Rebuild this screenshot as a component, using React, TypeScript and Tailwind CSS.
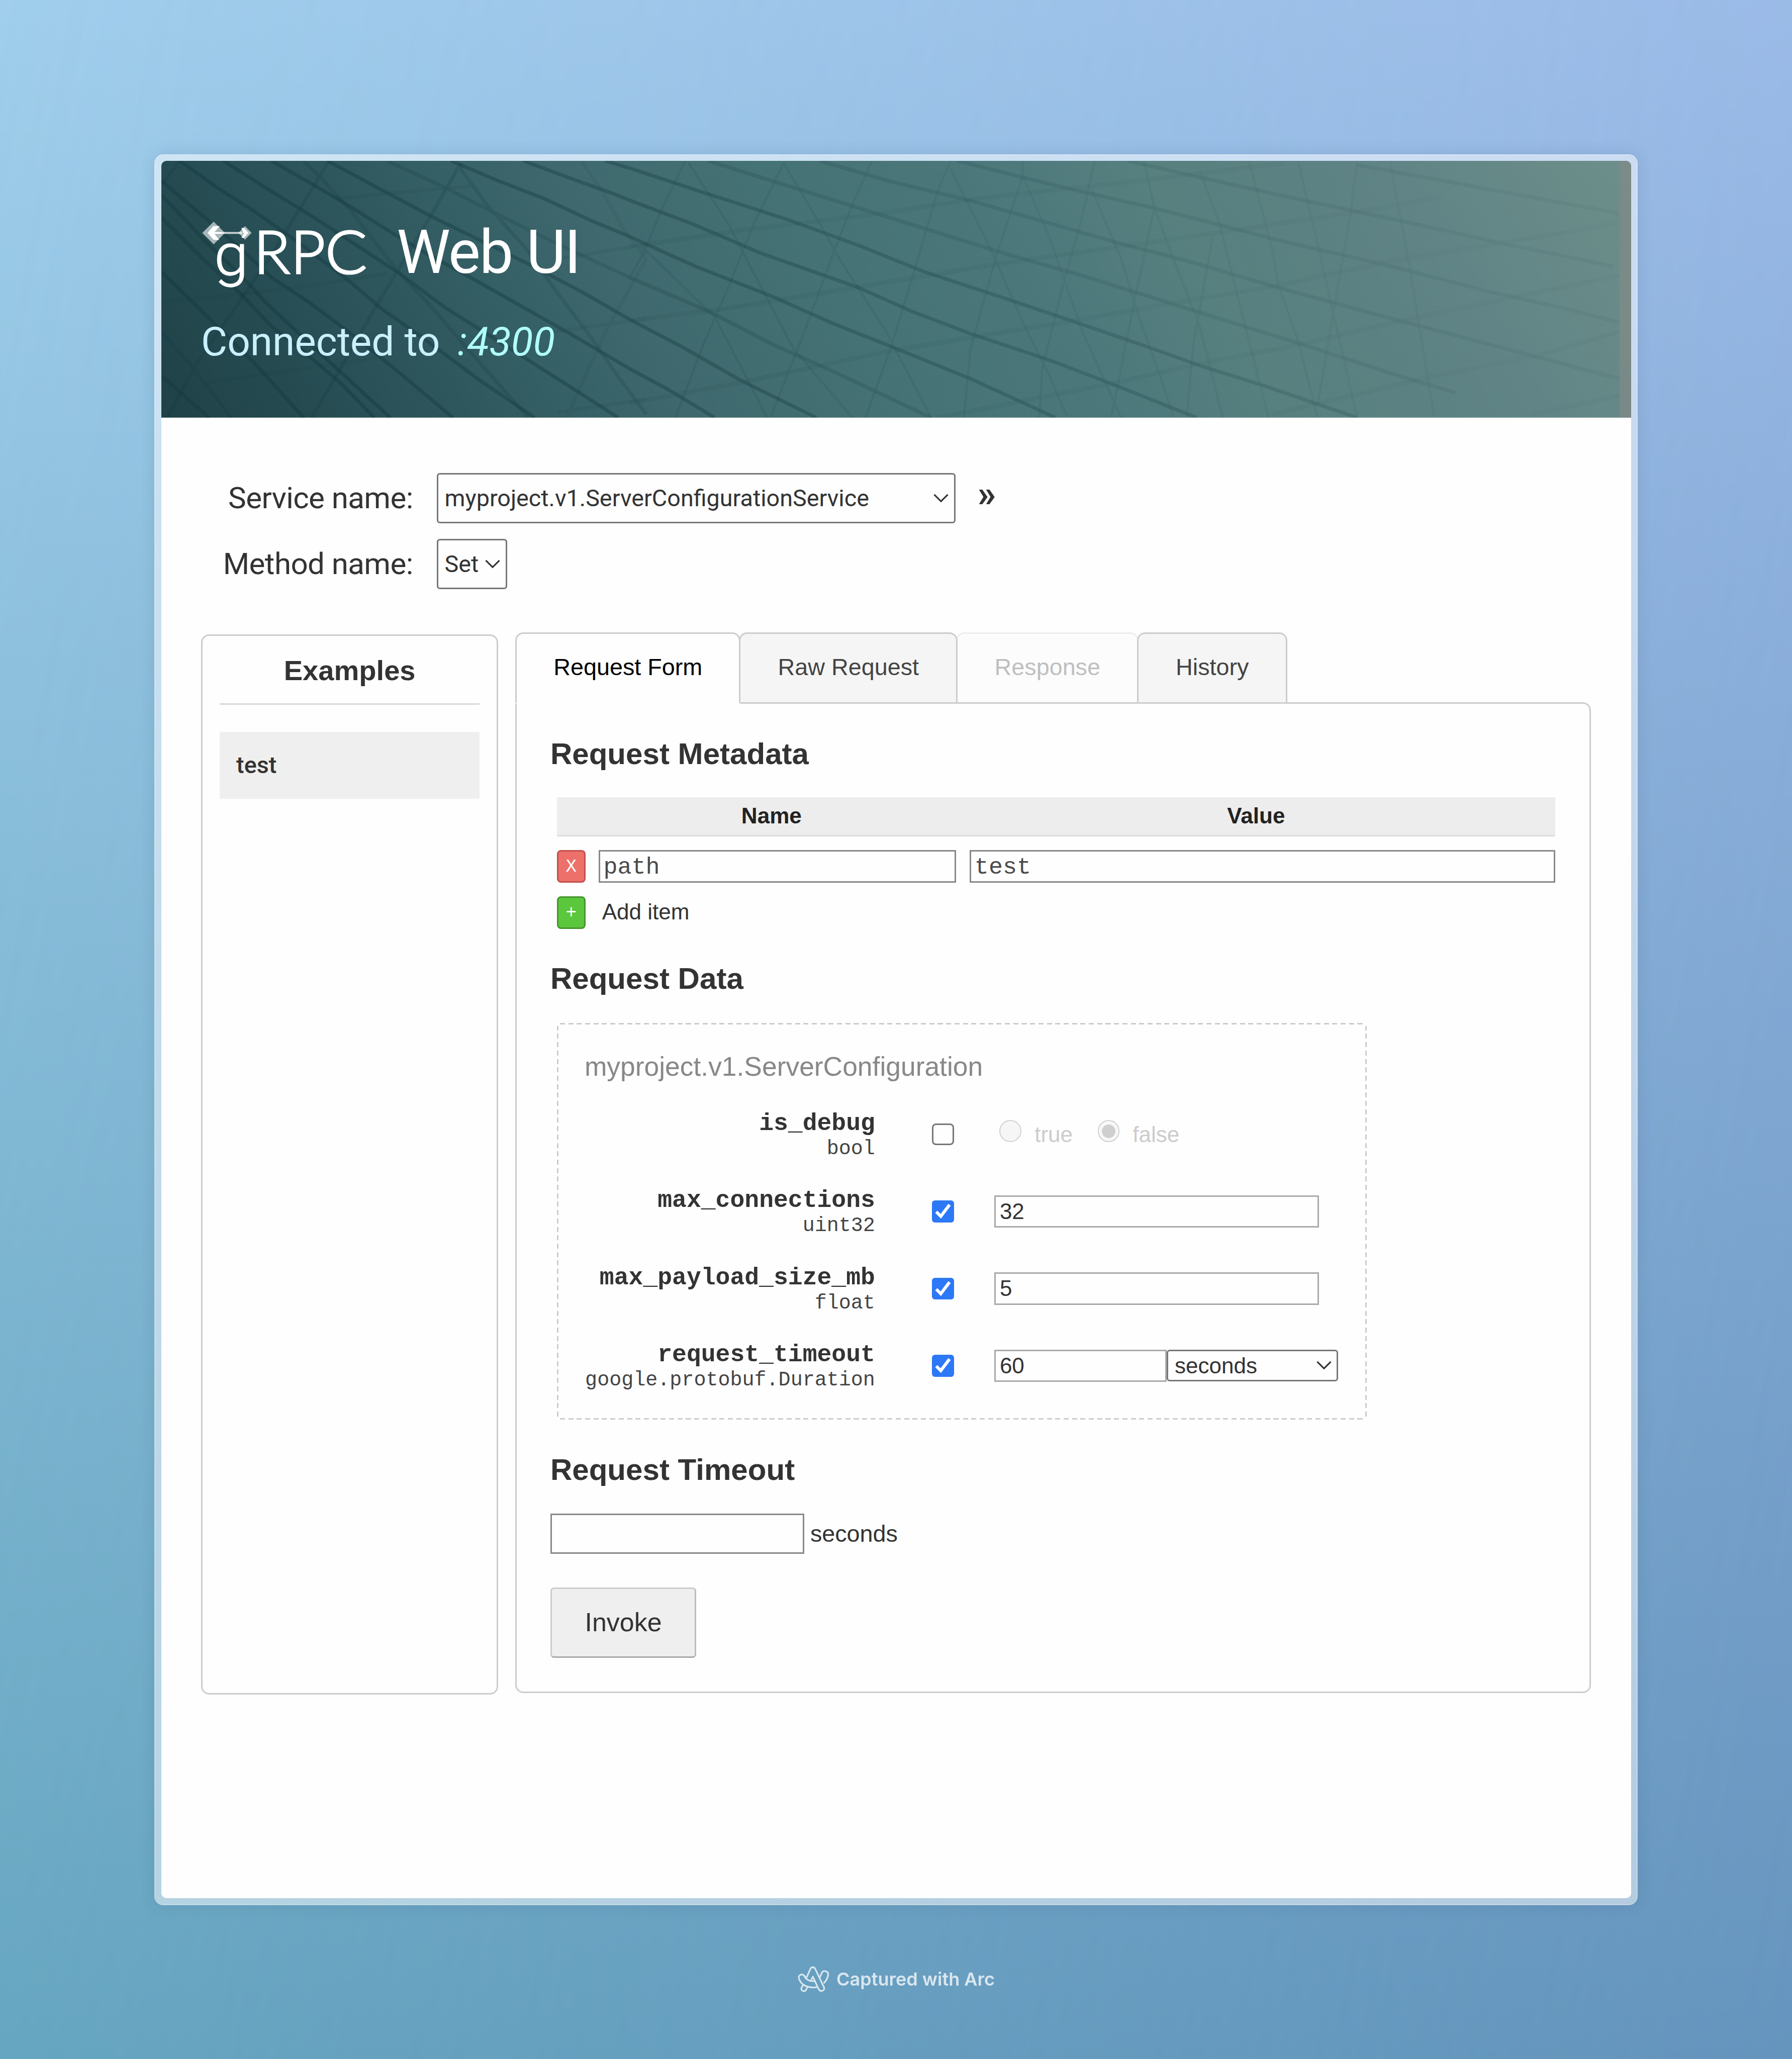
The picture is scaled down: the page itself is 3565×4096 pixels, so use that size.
import React from "react";

const sans = "font-['Liberation_Sans',Arial,sans-serif]";
const roboto = "font-['Roboto',sans-serif]";
const mono = "font-['Liberation_Mono','Courier_New',monospace]";

/* Cable pattern, left half: dark diagonals and their faint crossings. */
const leftStrong = [
  "57,205 205,420 300,560 400,720 515,850 640,1010 800,1230 965,1468",
  "115,98 230,240 345,365 490,540 650,750 745,890 870,1040 1050,1270 1220,1468",
  "250,98 390,250 500,365 640,520 800,700 940,880 1080,1030 1300,1270 1480,1468",
  "400,98 520,215 625,320 750,455 880,590 1020,720 1170,865 1330,1020 1516,1207",
  "575,98 740,250 905,400 1060,530 1215,660 1370,800 1516,944",
  "960,98 1100,200 1250,300 1400,420 1516,502",
  "1185,98 1330,190 1460,270 1516,308",
  "1440,98 1516,137",
  "57,280 130,410 190,520 300,700 380,850 480,1010 600,1200 770,1468",
  "57,400 180,610 300,800 400,980 490,1100 620,1290 720,1468",
  "57,690 160,860 260,1030 360,1200 500,1468",
  "57,1245 115,1330 205,1468",
];
const leftMid = [
  "760,98 940,240 1100,380 1290,540 1516,720",
  "57,1010 160,1210 275,1468",
  "115,98 60,220",
  "580,98 490,350 400,600 300,850 160,1200 75,1468",
  "500,98 560,200 650,370 790,680 900,880 1000,1080 1200,1468",
  "990,110 900,380 780,720 690,980 600,1250 525,1468",
  "985,130 1070,330 1190,560 1290,800 1400,1050 1480,1250 1568,1450",
];
const leftFaint = [
  "1568,620 1450,980 1390,1200 1320,1468",
  "1365,98 1430,260 1500,470 1568,620",
  "57,850 300,810 540,760 760,700",
  "200,1280 450,1220 730,1150",
  "600,300 900,250 1020,235",
  "1300,620 1568,545",
  "1280,1010 1568,940",
  "1290,1440 1568,1370",
];
/* Right half. */
const rightStrong = [
  "0,137 120,275 240,410 350,550 450,690 580,840 690,970 790,1090 870,1190 970,1300 1110,1468",
  "0,308 100,440 200,590 350,775 430,900 520,1020 640,1160 730,1280 865,1468",
  "0,502 100,660 220,825 310,965 400,1090 520,1260 650,1468",
  "0,944 80,1090 170,1270 285,1468",
  "0,1207 60,1320 130,1468",
];
const rightMid = [
  "0,720 120,900 220,1080 310,1220 460,1468",
  "120,98 240,230 350,350 460,470 570,590 690,710 800,830 900,940 1020,1070 1160,1230 1260,1335",
  "290,98 400,210 520,310 640,430 750,540 860,640 980,765 1100,880 1180,955 1380,1140 1510,1260",
  "500,98 650,230 800,350 900,440 1000,530 1150,650 1310,795 1420,880 1510,960",
  "760,98 900,210 1030,310 1180,420 1320,530 1500,660",
  "1110,120 1250,210 1420,320 1510,380",
];
const rightThin = [
  "235,110 290,430 320,620 390,1000 460,1468",
  "490,140 550,560 600,960 640,1240 668,1468",
  "600,98 600,180 640,500 690,1000 750,1468",
  "705,250 750,620 780,960 810,1250 830,1468",
  "785,98 800,340 825,580 870,980 905,1468",
  "870,150 900,430 930,850 975,1468",
  "945,98 980,560 990,760 1020,1060 1050,1468",
  "1020,98 1060,700 1110,1468",
  "1160,98 1190,660 1228,1468",
  "90,110 150,430 190,700 250,1100 340,1468",
  "20,560 130,930 210,1468",
  "85,98 50,350 20,600 0,720",
  "235,110 190,430 150,780 110,1100 70,1468",
  "370,98 340,330 310,600 270,980 215,1468",
  "490,98 470,260 440,620 400,1080 360,1468",
  "600,180 560,600 520,1100 510,1468",
  "710,98 690,400 660,780 630,1200 625,1468",
  "800,360 770,850 735,1468",
  "890,500 860,1080 850,1468",
  "1110,98 1100,380 1075,880 1050,1400",
];
const rightCross = [
  "0,555 170,470 380,380 540,295 790,200 1000,110",
  "0,950 140,890 350,770 560,650 710,575 900,480 1110,370 1240,290",
  "0,1390 170,1280 400,1110 540,1030 680,950 840,850 980,770 1150,640 1340,530 1510,430",
  "470,1468 730,1290 870,1180 1020,1080 1180,950 1370,810 1510,710",
  "980,1450 1210,1260 1380,1140 1510,1010",
  "1380,1450 1510,1350",
];

function Lines({ pts, w, o }: { pts: string[]; w: number; o: number }) {
  return (
    <g stroke="#14393f" strokeWidth={w} opacity={o} fill="none" strokeLinejoin="round">
      {pts.map((p) => (
        <polyline key={p} points={p} vectorEffect="non-scaling-stroke" />
      ))}
    </g>
  );
}

function HeaderArt() {
  return (
    <svg className="absolute inset-0 h-full w-full" viewBox="0 0 3504 611.5" preserveAspectRatio="none">
      <defs>
        <linearGradient id="sea" gradientUnits="userSpaceOnUse" x1="0" y1="611.5" x2="2904" y2="-1051">
          <stop offset="0" stopColor="#1f4147" />
          <stop offset="0.09" stopColor="#254b51" />
          <stop offset="0.19" stopColor="#2e575d" />
          <stop offset="0.25" stopColor="#345f65" />
          <stop offset="0.33" stopColor="#3e686d" />
          <stop offset="0.46" stopColor="#457275" />
          <stop offset="0.58" stopColor="#4b777b" />
          <stop offset="0.7" stopColor="#57807f" />
          <stop offset="0.78" stopColor="#5c8182" />
          <stop offset="0.86" stopColor="#618586" />
          <stop offset="1" stopColor="#6d8f8a" />
        </linearGradient>
        <linearGradient id="fade" gradientUnits="userSpaceOnUse" x1="0" y1="611.5" x2="2904" y2="-1051">
          <stop offset="0" stopColor="#fff" />
          <stop offset="0.25" stopColor="#ddd" />
          <stop offset="0.45" stopColor="#aaa" />
          <stop offset="0.65" stopColor="#777" />
          <stop offset="0.85" stopColor="#444" />
          <stop offset="1" stopColor="#2a2a2a" />
        </linearGradient>
        <mask id="fadeMask" maskUnits="userSpaceOnUse" x="0" y="0" width="3504" height="611.5">
          <rect width="3504" height="611.5" fill="url(#fade)" />
        </mask>
      </defs>
      <rect width="3504" height="611.5" fill="url(#sea)" />
      <g mask="url(#fadeMask)">
        <g transform="translate(-43.8 -43.8) scale(0.7653 0.4464)">
          <Lines pts={leftStrong} w={7} o={0.46} />
          <Lines pts={leftMid} w={7} o={0.22} />
          <Lines pts={leftFaint} w={7} o={0.1} />
        </g>
        <g transform="translate(1116.2 -43.8) scale(1.5625 0.4464)">
          <Lines pts={rightStrong} w={7} o={0.46} />
          <Lines pts={rightMid} w={7.5} o={0.26} />
          <Lines pts={rightThin} w={4.5} o={0.15} />
          <Lines pts={rightCross} w={9} o={0.1} />
        </g>
      </g>
      <rect x="3476" width="28" height="611.5" fill="#7f8a87" opacity="0.75" />
    </svg>
  );
}

function GrpcLogo() {
  return (
    <svg className="h-[208.6px] w-[333.8px] shrink-0 overflow-visible" viewBox="480 470 400 250">
      <g fill="#fff">
        <path d="M483 554.3 L510 527.5 L537 554.3 L510 581.5Z" opacity="0.6" />
        <path d="M569 554.3 L584.7 538 L600.5 554.3 L584.7 570.5Z" opacity="0.6" />
        <path d="M530 552 H578 V556.6 H530Z" opacity="0.75" />
        <path d="M524.5 538 H509 L495.5 554.3 L510 571 H523 L512 556.6 H530 V552 H512Z" />
        <path d="M576 542.5 H582.5 L593 554.3 L582.5 566 H576 L581.5 556.6 L580 552Z" />
      </g>
      <g fill="#fff" stroke="#fff" className="font-['Lato',sans-serif]" fontSize="143" fontWeight="300" strokeWidth="3.8">
        <text transform="translate(511 655) scale(1.08 1.02)" className="font-['Roboto',sans-serif]" fontSize="136" strokeWidth="1.6">
          g
        </text>
        <text x="605.5" y="651">R</text>
        <text x="693.5" y="651">P</text>
        <text transform="translate(776 651) scale(1.03 1)">C</text>
      </g>
    </svg>
  );
}

function Chevron({ className }: { className: string }) {
  return (
    <svg className={className + " h-[20px] w-[32px]"} viewBox="0 0 32 20" fill="none" stroke="#333" strokeWidth="3.2">
      <path d="M2.5 2.8 L16 16.3 L29.5 2.8" />
    </svg>
  );
}

function SelectBox({ text, width }: { text: string; width: string }) {
  return (
    <div className={`flex h-[100px] items-center rounded-[6px] border-[3px] border-[#767676] pl-[13px] pr-[10px] ${width}`}>
      <span className={`${roboto} text-[46.73px] leading-[56px] text-[#333]`}>{text}</span>
      <Chevron className="ml-auto" />
    </div>
  );
}

function Row({ name, type, checked, children }: { name: string; type: string; checked?: boolean; children: React.ReactNode }) {
  return (
    <div className="flex h-[153.5px] items-center pl-[55px]">
      <div className={`${mono} w-[578px] pt-[5px] text-right text-[#333]`}>
        <div className="text-[48.07px] leading-[53px] font-bold">{name}</div>
        <div className="text-[40.06px] leading-[48px] text-[#444]">{type}</div>
      </div>
      {checked ? (
        <div className="ml-[113.5px] h-[43.5px] w-[43.5px] shrink-0 rounded-[6px] bg-[#2d78f7]">
          <svg viewBox="0 0 43.5 43.5" fill="none" stroke="#fff" strokeWidth="6.2">
            <path d="M8.6 22.6 L17.6 31.6 L35 8.6" />
          </svg>
        </div>
      ) : (
        <div className="ml-[113.5px] h-[43.5px] w-[43.5px] shrink-0 rounded-[8px] border-[3px] border-[#767676]" />
      )}
      <div className="ml-[80px] flex items-center">{children}</div>
    </div>
  );
}

function NumInput({ value, width }: { value: string; width: string }) {
  return (
    <div className={`${sans} h-[64.6px] border-[3px] border-[#aaa] pl-[8px] text-[44.06px] leading-[57px] text-[#333] ${width}`}>
      {value}
    </div>
  );
}

function Heading({ text, className }: { text: string; className: string }) {
  return <h3 className={`${sans} text-[60.08px] leading-[80px] font-bold text-[#333] ${className}`}>{text}</h3>;
}

function ArcIcon() {
  return (
    <svg className="h-[54px] w-[65px]" viewBox="-2 -2 78.4 65" fill="none" stroke="#fff" strokeWidth="3.8" strokeLinecap="round" strokeLinejoin="round">
      <path d="M20.5 26.5 L29.4 6.5 C31.5 0.6 39 0.6 41.4 6.5 L62.6 51 C64.5 58.5 53.5 62.3 49.6 55 L35.6 24.8 L30.4 35.2" />
      <path d="M12.2 44.8 L8.4 51 C6 59 15.5 62.5 19.2 56.3 L22.8 49" />
      <path d="M20.5 30.5 L14.9 22.6 C9.5 16.5 0 21 2 28.5 C6 43.5 22 53.5 45.5 49.8" />
      <path d="M14.9 22.6 C19.5 32 29.5 37.5 40.4 35" />
      <path d="M52.6 25.5 L57.2 15 C61 8 73.5 11.5 72.2 20 C71.3 28 68 34 62.6 39.3" />
    </svg>
  );
}

export default function App() {
  return (
    <div className="relative flex h-[4096px] w-[3565px] flex-col items-center overflow-hidden bg-linear-to-b from-[#a0ceec] to-[#67aac1]">
      <div className="absolute inset-0 bg-linear-to-b from-[#9ab6e6] to-[#6594bd] [mask-image:linear-gradient(100deg,transparent_0%,black_100%)]" />

      <div className="relative mt-[306.5px] h-[3483px] w-[2951px] shrink-0 rounded-[18px] border-[2px] border-white/60 bg-white/50 bg-clip-padding p-[11.5px] shadow-[0_0_30px_rgba(40,70,110,0.14)]">
        <div className="h-full w-full overflow-hidden rounded-[10px] bg-[#fefefe]">
          <header className="relative h-[510.8px] overflow-hidden pt-[72.5px] pl-[79.5px]">
            <HeaderArt />
            <div className="relative flex items-start">
              <GrpcLogo />
              <span className={`${roboto} mt-[41.7px] ml-[55.5px] text-[120.2px] leading-[135px] font-[450] tracking-[-2px] text-white`}>Web UI</span>
            </div>
            <div className={`${roboto} relative -mt-[16.2px] text-[80.1px] leading-[191px] font-[450] text-[#c9f0fc]`}>
              Connected to <span className="ml-[15px] text-[#b0fffc] italic">:4300</span>
            </div>
          </header>

          <main className="pl-[79.6px]">
            <div className="flex flex-col gap-[31px] pt-[110.7px]">
              <div className="flex items-center">
                <div className={`${roboto} w-[421.5px] text-right text-[60.08px] leading-[70px] tracking-[-0.6px] text-[#333]`}>Service name:</div>
                <div className="ml-[47px]">
                  <SelectBox text="myproject.v1.ServerConfigurationService" width="w-[1032px]" />
                </div>
                <span className={`${roboto} -mt-[16px] ml-[44px] text-[74px] leading-[70px] font-bold text-[#333]`}>»</span>
              </div>
              <div className="flex items-center">
                <div className={`${roboto} w-[421.5px] text-right text-[60.08px] leading-[70px] tracking-[-0.6px] text-[#333]`}>Method name:</div>
                <div className="ml-[47px]">
                  <SelectBox text="Set" width="w-[140.5px]" />
                </div>
              </div>
            </div>

            <div className="mt-[86px] flex items-start">
              <aside className="mt-[3.3px] h-[2109px] w-[591px] rounded-[16px] border-[3px] border-[#ccc] px-[34px]">
                <div className={`${sans} h-[137.4px] border-b-[3px] border-[#d8d8d8] text-center text-[56.08px] leading-[137px] font-bold text-[#333]`}>
                  Examples
                </div>
                <div className={`${roboto} mt-[53.5px] h-[133px] bg-[#efefef] pl-[33px] text-[46.7px] leading-[132px] font-medium text-[#333]`}>
                  test
                </div>
              </aside>

              <section className="ml-[34.2px] w-[2139.4px]">
                <div className={`${sans} relative z-10 flex h-[142px] items-start text-center text-[46.73px] leading-[132px] text-[#444]`}>
                  <div className="h-[142px] w-[448px] rounded-t-[16px] border-[3px] border-[#ccc] border-b-[#fefefe] bg-[#fefefe] text-black">Request Form</div>
                  <div className="relative z-10 -ml-[3px] h-[139px] w-[435px] rounded-t-[16px] border-[3px] border-b-0 border-[#ccc] bg-[#f5f5f5]">Raw Request</div>
                  <div className="-ml-[3px] h-[139px] w-[363px] rounded-t-[16px] border-[3px] border-b-0 border-[#eee] bg-[#fcfcfc] text-[#bfbfbf]">Response</div>
                  <div className="relative z-10 -ml-[3px] h-[139px] w-[299px] rounded-t-[16px] border-[3px] border-b-0 border-[#ccc] bg-[#f5f5f5]">History</div>
                </div>

                <div className="-mt-[3px] h-[1970.8px] rounded-b-[16px] rounded-tr-[16px] border-[3px] border-[#ccc] pr-[67.5px] pl-[66.6px]">
                  <Heading text="Request Metadata" className="mt-[60px]" />
                  <div className="mt-[45.5px] ml-[13.2px]">
                    <div className={`${sans} flex h-[78px] border-b-[3px] border-[#ddd] bg-[#ededed] pl-[58px] text-center text-[44.06px] leading-[74px] font-bold text-[#222]`}>
                      <div className="w-[737.5px]">Name</div>
                      <div className="flex-1">Value</div>
                    </div>
                    <div className={`${mono} mt-[27px] flex h-[65px] text-[46.73px] leading-[63px] text-[#4a4a4a]`}>
                      <div className="w-[56.6px] rounded-[8px] border-[3px] border-[#c4504d] bg-[#ee706b] text-center text-[36px] leading-[61px] text-white">X</div>
                      <div className="ml-[26.8px] w-[711px] border-[3px] border-[#888] pl-[6px]">path</div>
                      <div className="ml-[26.4px] flex-1 border-[3px] border-[#888] pl-[7px]">test</div>
                    </div>
                    <div className="mt-[27px] flex h-[65px]">
                      <div className={`${mono} w-[56.6px] rounded-[8px] border-[3px] border-[#46962f] bg-[#5bc73c] text-center text-[36px] leading-[61px] text-white`}>+</div>
                      <div className={`${sans} ml-[33px] text-[44.06px] leading-[62px] text-[#333]`}>Add item</div>
                    </div>
                  </div>

                  <Heading text="Request Data" className="mt-[59px]" />
                  <div className="mt-[48px] ml-[13px] h-[789.3px] w-[1611.4px] pt-[28px] [background-image:repeating-linear-gradient(90deg,#ccc_0_10px,transparent_10px_16.7px),repeating-linear-gradient(90deg,#ccc_0_10px,transparent_10px_16.7px),repeating-linear-gradient(0deg,#ccc_0_10px,transparent_10px_16.7px),repeating-linear-gradient(0deg,#ccc_0_10px,transparent_10px_16.7px)] bg-no-repeat [background-position:6px_0,6px_100%,0_6px,100%_6px] [background-size:1599px_3px,1599px_3px,3px_777px,3px_777px]">
                    <div className={`${sans} h-[116.8px] pl-[55px] text-[53.4px] leading-[117px] text-[#888]`}>myproject.v1.ServerConfiguration</div>
                    <Row name="is_debug" type="bool">
                      <div className="mb-[13px] ml-[10.4px] h-[43.5px] w-[43.5px] rounded-full border-[2.6px] border-[#d0d0d0] bg-[#f6f6f6]" />
                      <span className={`${sans} ml-[26.4px] text-[44.06px] leading-[50px] text-[#ccc]`}>true</span>
                      <div className="mb-[13px] ml-[49.6px] flex h-[43.5px] w-[43.5px] items-center justify-center rounded-full border-[2.6px] border-[#d0d0d0] bg-[#f8f8f8]">
                        <div className="h-[27px] w-[27px] rounded-full bg-[#cfcfcf]" />
                      </div>
                      <span className={`${sans} ml-[26px] text-[44.06px] leading-[50px] text-[#ccc]`}>false</span>
                    </Row>
                    <Row name="max_connections" type="uint32" checked>
                      <NumInput value="32" width="w-[645.8px]" />
                    </Row>
                    <Row name="max_payload_size_mb" type="float" checked>
                      <NumInput value="5" width="w-[645.8px]" />
                    </Row>
                    <Row name="request_timeout" type="google.protobuf.Duration" checked>
                      <NumInput value="60" width="w-[343px]" />
                      <div className={`${sans} mb-[2px] flex h-[63px] w-[341.5px] items-center rounded-[6px] border-[3px] border-[#767676] pr-[9px] pl-[13px] text-[44.06px] leading-[57px] text-[#333]`}>
                        seconds
                        <Chevron className="ml-auto" />
                      </div>
                    </Row>
                  </div>

                  <Heading text="Request Timeout" className="mt-[59.4px]" />
                  <div className={`${sans} mt-[47.5px] flex items-center text-[46.73px] text-[#333]`}>
                    <div className="h-[79.7px] w-[505px] border-[3px] border-[#888]" />
                    <span className="ml-[12px] leading-[60px]">seconds</span>
                  </div>
                  <div className={`${sans} mt-[67px] h-[140px] w-[290.4px] rounded-[7px] border-[3px] border-[#ccc] border-r-[#bbb] border-b-[#aaa] bg-[#efefef] text-center text-[52px] leading-[133px] text-[#333]`}>
                    Invoke
                  </div>
                </div>
              </section>
            </div>
          </main>
        </div>
      </div>

      <footer className="relative mt-[120.5px] flex items-center text-white opacity-75">
        <ArcIcon />
        <span className="ml-[13px] font-['Inter',sans-serif] text-[36px] leading-[50px] font-semibold">Captured with Arc</span>
      </footer>
    </div>
  );
}
